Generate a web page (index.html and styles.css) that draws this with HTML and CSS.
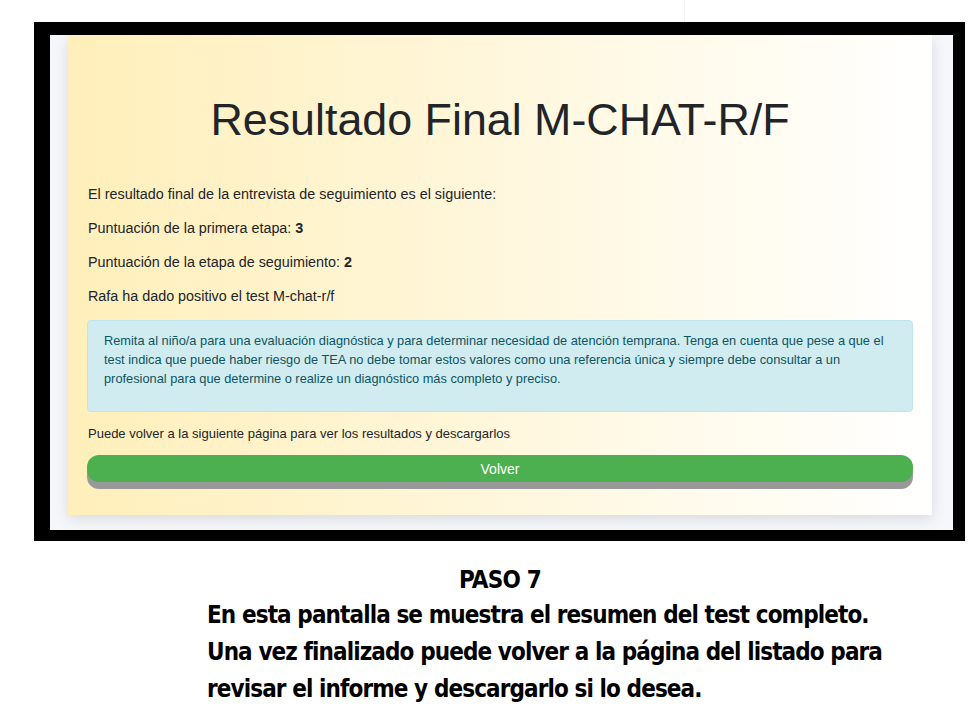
FILE: index.html
```html
<!DOCTYPE html>
<html lang="es">
<head>
<meta charset="utf-8">
<title>Resultado Final M-CHAT-R/F</title>
<link rel="stylesheet" href="styles.css">
</head>
<body>
<div class="topline"></div>
<div class="frame">
  <div class="screen">
    <div class="card">
      <h1 class="title">Resultado Final M-CHAT-R/F</h1>
      <p class="line">El resultado final de la entrevista de seguimiento es el siguiente:</p>
      <p class="line">Puntuación de la primera etapa: <b>3</b></p>
      <p class="line">Puntuación de la etapa de seguimiento: <b>2</b></p>
      <p class="line">Rafa ha dado positivo el test M-chat-r/f</p>
      <div class="alert">Remita al niño/a para una evaluación diagnóstica y para determinar necesidad de atención temprana. Tenga en cuenta que pese a que el test indica que puede haber riesgo de TEA no debe tomar estos valores como una referencia única y siempre debe consultar a un profesional para que determine o realize un diagnóstico más completo y preciso.</div>
      <p class="note">Puede volver a la siguiente página para ver los resultados y descargarlos</p>
      <button class="btn">Volver</button>
    </div>
  </div>
</div>
<div class="caption">
  <h2 class="step">PASO 7</h2>
  <p class="desc">En esta pantalla se muestra el resumen del test completo.<br>Una vez finalizado puede volver a la página del listado para<br>revisar el informe y descargarlo si lo desea.</p>
</div>
</body>
</html>
```
FILE: styles.css
```css
html, body {
  margin: 0;
  padding: 0;
  background: #ffffff;
}
body {
  font-family: "Liberation Sans", Arial, sans-serif;
  color: #212529;
}
.topline {
  height: 22px;
  width: 1px;
  margin-left: 684px;
  background: #f3f3f3;
}
.frame {
  margin-left: 34px;
  width: 931px;
  height: 519px;
  box-sizing: border-box;
  background: #000;
  padding: 13px 12px 11px 16px;
}
.screen {
  height: 495px;
  background: #f6f7fa;
  padding: 0 21px 0 18px;
  overflow: hidden;
}
.card {
  height: 480px;
  box-sizing: border-box;
  background: linear-gradient(to right, #ffefba, #ffffff);
  box-shadow: 0 4px 14px rgba(0, 0, 0, 0.12);
  padding: 56px 19px 0 19px;
}
.title {
  margin: 0 0 37px;
  font-weight: 400;
  font-size: 44.8px;
  line-height: 56px;
  text-align: center;
  color: #212529;
}
.line {
  margin: 0 0 14px 1px;
  font-size: 14.35px;
  line-height: 20px;
}
.line b {
  font-weight: 700;
}
.alert {
  margin-top: 5px;
  border: 1px solid #bee5eb;
  border-radius: 4px;
  background: #d1ecf1;
  color: #0c5460;
  font-size: 12.8px;
  line-height: 19px;
  padding: 10px 16px 23px;
}
.note {
  margin: 12px 0 0 1px;
  font-size: 13px;
  line-height: 19px;
}
.btn {
  display: block;
  width: 100%;
  margin-top: 12px;
  height: 27px;
  border: 0;
  border-radius: 12px;
  background: #4caf50;
  color: #fff;
  font-family: "Liberation Sans", Arial, sans-serif;
  font-size: 14px;
  box-shadow: 0 7px 0 #999999;
  padding: 0;
}
.caption {
  margin-left: 207px;
  width: 586px;
  color: #000;
  font-family: "Liberation Sans Narrow", "DejaVu Sans Condensed", "Roboto", sans-serif;
  font-weight: 700;
}
.step {
  margin: 22px 0 0;
  text-align: center;
  font-size: 24px;
  line-height: 34px;
  font-weight: 700;
  letter-spacing: -0.8px;
}
.desc {
  margin: 0;
  width: 760px;
  white-space: nowrap;
  font-size: 24px;
  line-height: 37px;
  letter-spacing: -0.9px;
}
```
